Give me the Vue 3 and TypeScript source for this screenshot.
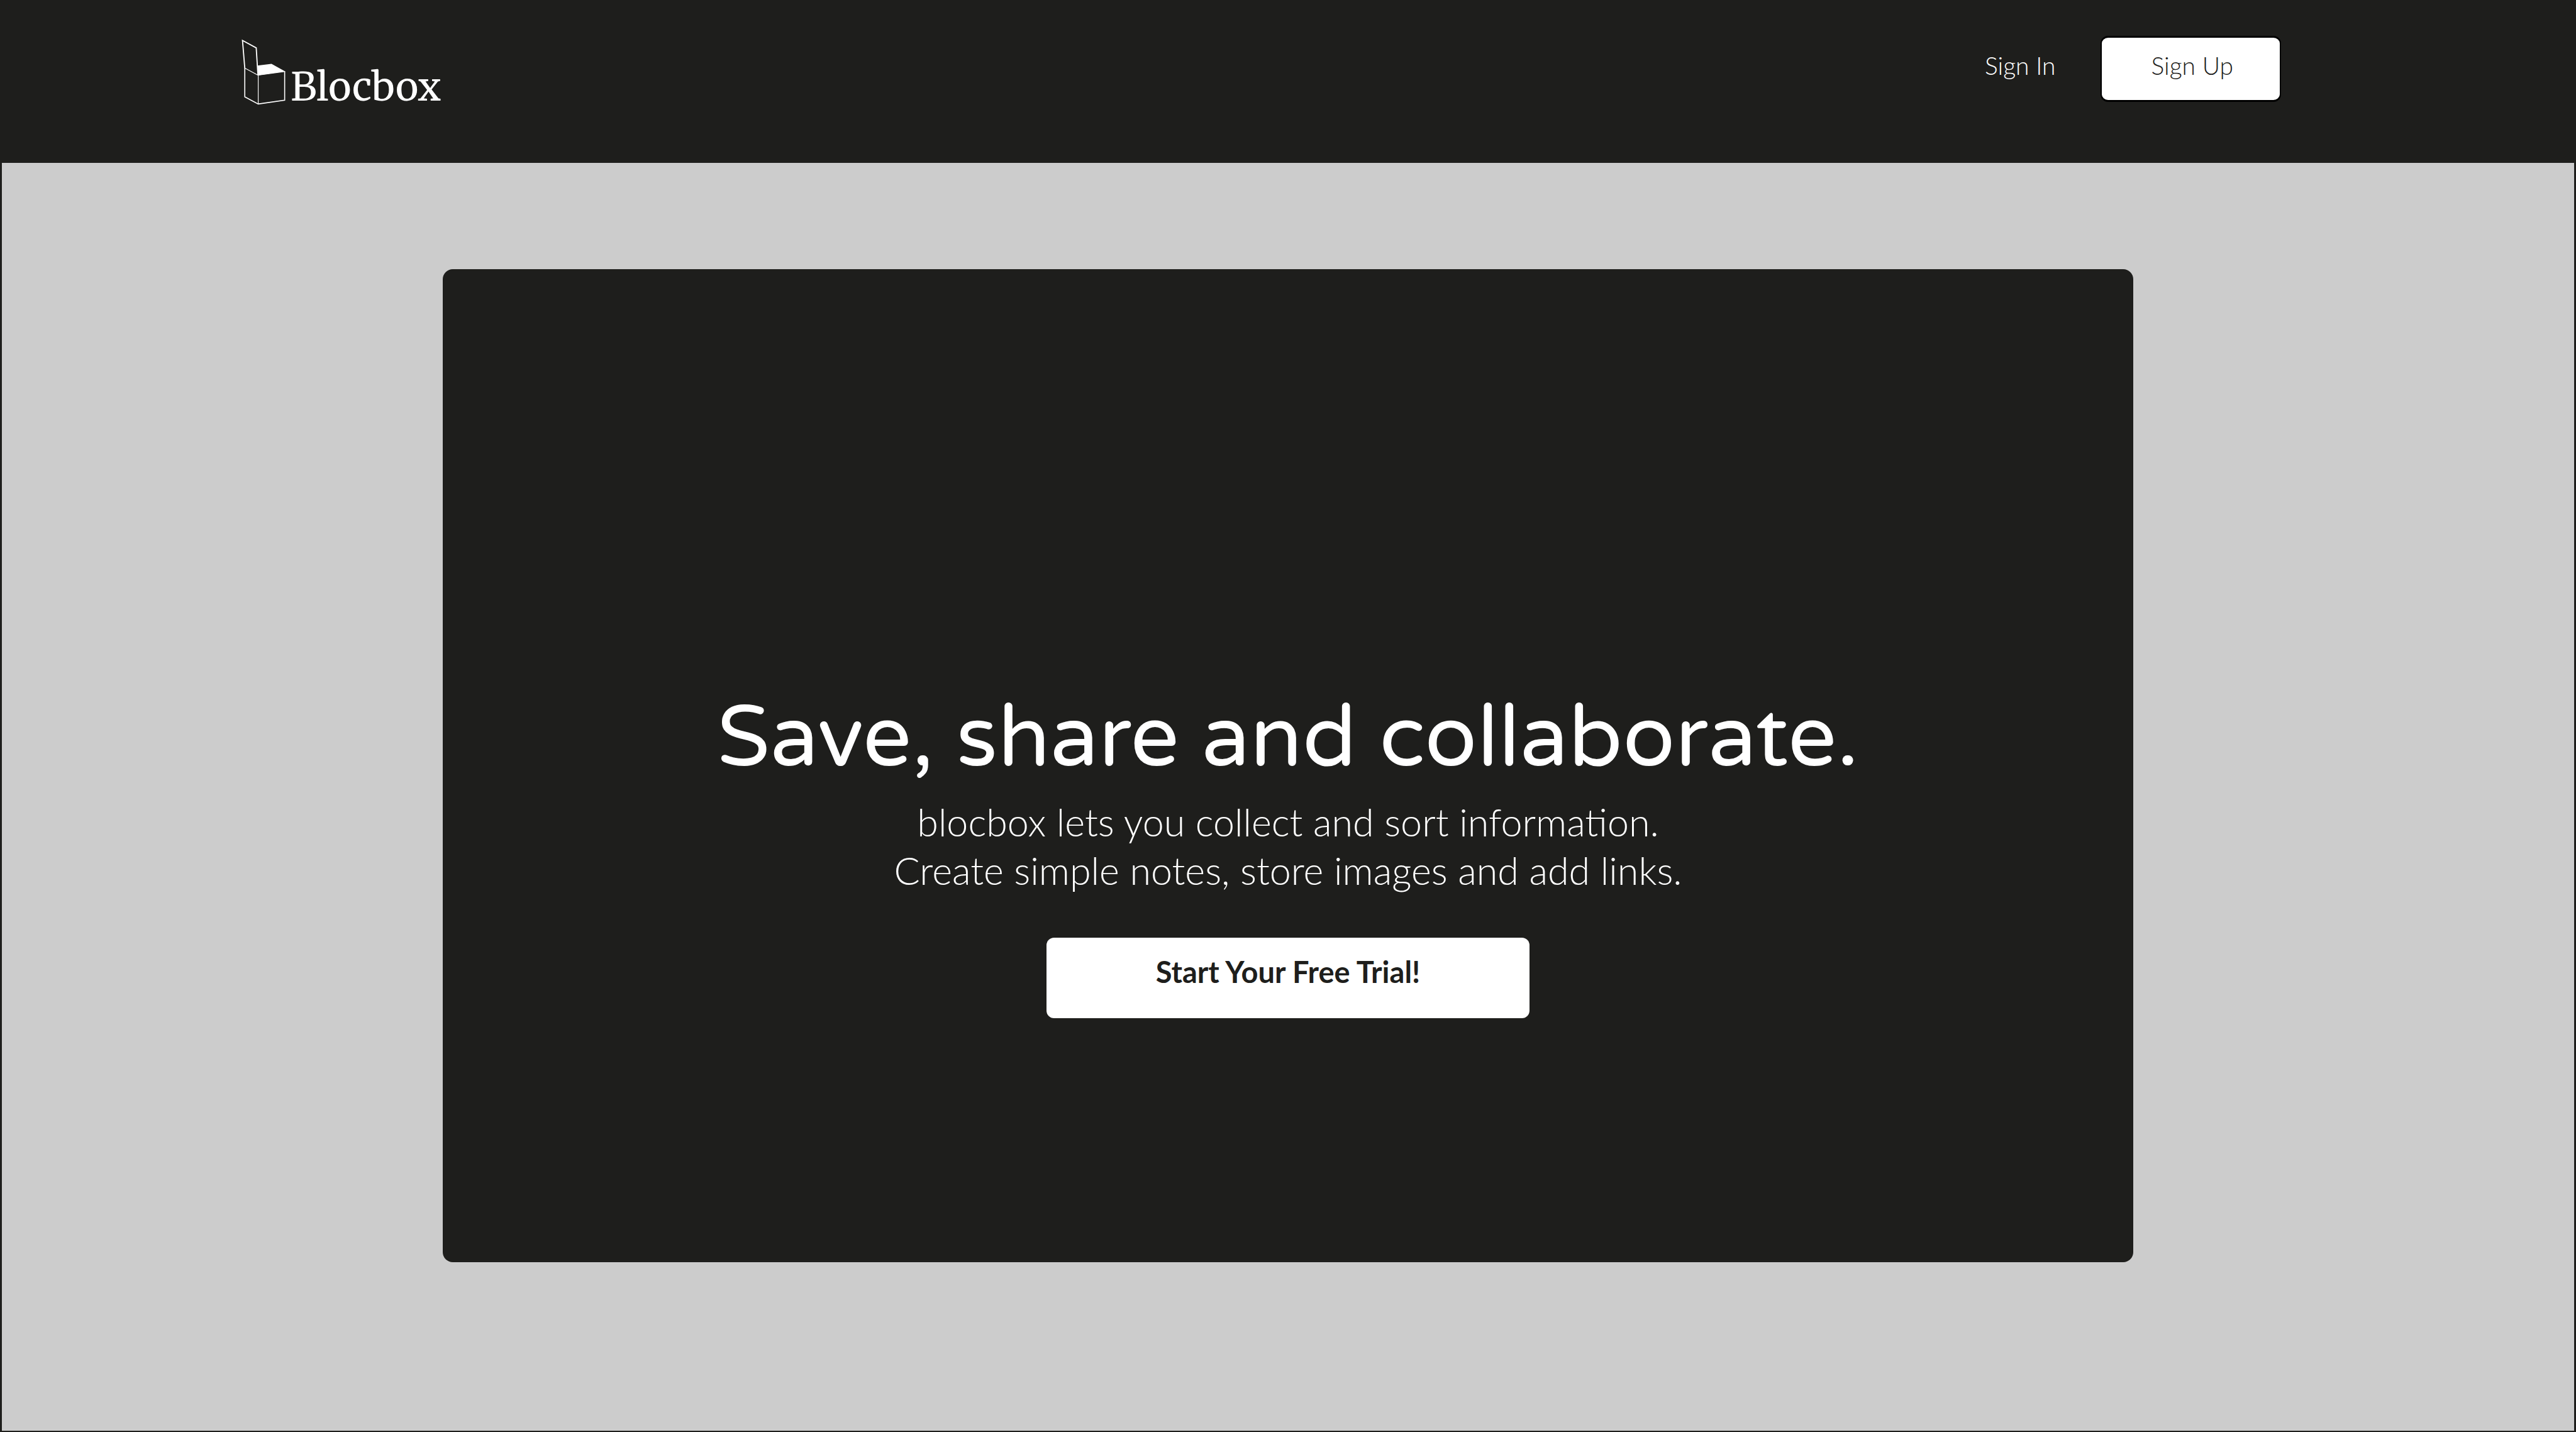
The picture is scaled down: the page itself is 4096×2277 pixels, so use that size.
<script setup lang="ts">
const pitch: string[] = [
  'blocbox lets you collect and sort information.',
  'Create simple notes, store images and add links.',
]
</script>

<template>
  <div class="page">
    <header class="top">
      <a class="logo" href="#" aria-label="Blocbox">
        <svg class="mark" viewBox="70 62 308 462" aria-hidden="true">
          <polygon points="182,248 280,236 375,289 187,316" fill="#fff" />
          <g fill="none" stroke="#fff" stroke-linejoin="miter">
            <path d="M93 266 L77 72 L173 124 L185 314" stroke-width="8" />
            <path d="M93 266 L187 316" stroke-width="5" />
            <path d="M93 264 V467 L187 517 L372 490 V289" stroke-width="7" />
            <path d="M187 314 V517" stroke-width="5" />
            <path d="M187 315 L375 289" stroke-width="5" />
          </g>
        </svg>
        <span class="name">Blocbox</span>
      </a>
      <nav class="nav">
        <a class="sign-in" href="#">Sign In</a>
        <button class="sign-up" type="button">Sign Up</button>
      </nav>
    </header>

    <main class="stage">
      <section class="card">
        <h1 class="title">Save, share and collaborate.</h1>
        <p class="pitch">
          <span v-for="line in pitch" :key="line" class="line">{{ line }}</span>
        </p>
        <button class="cta" type="button">Start Your Free Trial!</button>
      </section>
    </main>
  </div>
</template>

<style>
body {
  margin: 0;
  background: #cccccc;
}
</style>

<style scoped>
.page {
  box-sizing: border-box;
  min-height: 100vh;
  display: flex;
  flex-direction: column;
  border: solid #1e1e1c;
  border-width: 0 3px 2px;
  background: #cccccc;
  color: #ffffff;
  font-family: Lato, "Open Sans", sans-serif;
}

.top {
  box-sizing: border-box;
  min-height: 259px;
  display: flex;
  justify-content: space-between;
  align-items: flex-start;
  padding: 57px 466px 57px 381px;
  background: #1e1e1c;
}

.logo {
  display: flex;
  align-items: flex-end;
  gap: 8px;
  margin-top: 5px;
  color: inherit;
  text-decoration: none;
}

.mark {
  display: block;
  width: 70px;
  height: 105px;
}

.name {
  font-family: Merriweather, "Noto Serif", serif;
  font-size: 62px;
  line-height: 58px;
}

.nav {
  display: flex;
  align-items: flex-start;
  gap: 72px;
  font-size: 39px;
  line-height: 48px;
  font-weight: 300;
}

.sign-in {
  padding-top: 23px;
  color: inherit;
  text-decoration: none;
}

.sign-up {
  padding: 20px 74px 31px 78px;
  border: solid #000000;
  border-width: 3px 2px;
  border-radius: 12px;
  background: #ffffff;
  color: #1e1e1c;
  font: inherit;
}

.stage {
  flex: 1;
  padding: 169px 24px 267px;
}

.card {
  box-sizing: border-box;
  max-width: 2688px;
  margin: 0 auto;
  padding: 666px 48px 388px;
  display: flex;
  flex-direction: column;
  align-items: center;
  border-radius: 16px;
  background: #1e1e1c;
  text-align: center;
}

.title {
  margin: 0 0 14px;
  font-family: "Varela Round", Varela, "Noto Sans", sans-serif;
  font-size: 137px;
  line-height: 160px;
  font-weight: 400;
}

.pitch {
  margin: 0 0 69px;
  font-size: 61px;
  line-height: 77px;
  font-weight: 300;
}

.line {
  display: block;
}

.cta {
  width: 768px;
  max-width: 100%;
  padding: 26px 0 46px;
  border: 0;
  border-radius: 12px;
  background: #ffffff;
  color: #1e1e1c;
  font-family: inherit;
  font-size: 47px;
  line-height: 56px;
  font-weight: 700;
}
</style>
